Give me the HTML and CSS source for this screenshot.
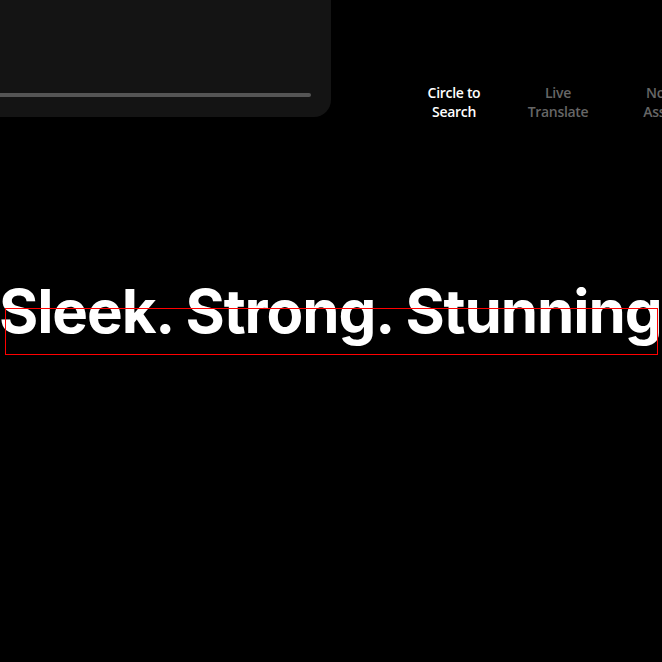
FILE: index.html
```html
<!DOCTYPE html>
<html lang="en">
<head>
<meta charset="utf-8">
<title>Galaxy</title>
<link rel="stylesheet" href="styles.css">
</head>
<body>
<div class="page">
  <div class="top">
    <div class="card">
      <div class="progress"></div>
    </div>
    <ul class="tabs">
      <li class="tab active">Circle to<br>Search</li>
      <li class="tab">Live<br>Translate</li>
      <li class="tab">Note<br>Assist</li>
    </ul>
  </div>
  <div class="headline-wrap">
    <h2 class="headline">Sleek. Strong. Stunning.</h2>
    <div class="debug-box"></div>
  </div>
</div>
</body>
</html>
```
FILE: styles.css
```css
html, body {
  margin: 0;
  padding: 0;
  background: #000;
  overflow: hidden;
}
.page {
  width: 662px;
  height: 662px;
  background: #000;
  overflow: hidden;
  font-family: "Open Sans", "Noto Sans", sans-serif;
}
.top {
  display: flex;
  align-items: flex-start;
  height: 117px;
}
.card {
  width: 331px;
  height: 117px;
  flex: none;
  background: #141414;
  border-bottom-right-radius: 17px;
  display: flex;
  flex-direction: column;
  justify-content: flex-end;
  padding-bottom: 20px;
  box-sizing: border-box;
}
.progress {
  width: 311px;
  height: 4px;
  background: #555;
  border-radius: 0 2px 2px 0;
}
.tabs {
  list-style: none;
  margin: 83px 0 0 71px;
  padding: 0;
  display: flex;
  flex: none;
}
.tab {
  width: 104px;
  text-align: center;
  font-size: 14px;
  line-height: 19px;
  font-weight: 600;
  color: #666;
  letter-spacing: -0.3px;
}
.tab.active {
  color: #fff;
}
.headline-wrap {
  position: relative;
  margin-top: 158px;
}
.headline {
  margin: 0;
  white-space: nowrap;
  font-family: "Inter", sans-serif;
  font-weight: 700;
  font-size: 60px;
  line-height: 72px;
  color: #fff;
  letter-spacing: -1.1px;
  text-indent: -1px;
}
.debug-box {
  position: absolute;
  left: 5px;
  top: 33px;
  width: 651px;
  height: 45px;
  border: 1px solid #f00;
}
```
